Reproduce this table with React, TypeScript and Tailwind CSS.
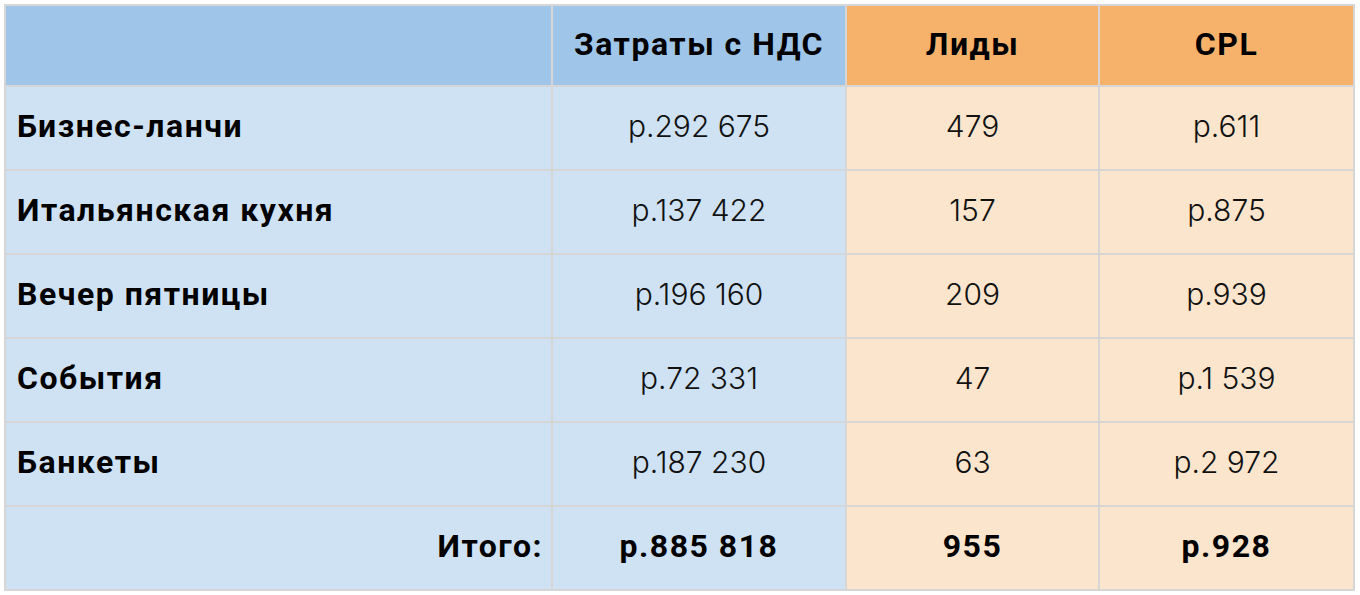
const rows = [
  { name: "Бизнес-ланчи", cost: "р.292 675", leads: "479", cpl: "р.611" },
  { name: "Итальянская кухня", cost: "р.137 422", leads: "157", cpl: "р.875" },
  { name: "Вечер пятницы", cost: "р.196 160", leads: "209", cpl: "р.939" },
  { name: "События", cost: "р.72 331", leads: "47", cpl: "р.1 539" },
  { name: "Банкеты", cost: "р.187 230", leads: "63", cpl: "р.2 972" },
]

const bold = "font-['Roboto',sans-serif] font-bold text-[32px] tracking-[1.5px] text-black pb-[4px]"
const num = "font-['Inter',sans-serif] font-light text-[30px] text-[#111] pb-[4px]"

export default function App() {
  return (
    <div className="w-[1360px] h-[595px] bg-white p-[4px]">
      <table className="border-collapse table-fixed w-[1349px]">
        <colgroup>
          <col className="w-[547px]" />
          <col className="w-[294px]" />
          <col className="w-[253px]" />
          <col className="w-[255px]" />
        </colgroup>
        <thead>
          <tr className="h-[81px]">
            <th className="border-2 border-[#d6d6d6] bg-[#9fc5e8]"></th>
            <th className={`border-2 border-[#d6d6d6] bg-[#9fc5e8] text-center ${bold}`}>Затраты с НДС</th>
            <th className={`border-2 border-[#d6d6d6] bg-[#f6b26b] text-center ${bold}`}>Лиды</th>
            <th className={`border-2 border-[#d6d6d6] bg-[#f6b26b] text-center ${bold}`}>CPL</th>
          </tr>
        </thead>
        <tbody>
          {rows.map((r) => (
            <tr key={r.name} className="h-[84px]">
              <td className={`border-2 border-[#d6d6d6] bg-[#cfe2f3] pl-[11px] text-left ${bold}`}>{r.name}</td>
              <td className={`border-2 border-[#d6d6d6] bg-[#cfe2f3] text-center ${num}`}>{r.cost}</td>
              <td className={`border-2 border-[#d6d6d6] bg-[#fce5cd] text-center ${num}`}>{r.leads}</td>
              <td className={`border-2 border-[#d6d6d6] bg-[#fce5cd] text-center ${num}`}>{r.cpl}</td>
            </tr>
          ))}
          <tr className="h-[84px]">
            <td className={`border-2 border-[#d6d6d6] bg-[#cfe2f3] pr-[8px] text-right ${bold}`}>Итого:</td>
            <td className={`border-2 border-[#d6d6d6] bg-[#cfe2f3] text-center ${bold}`}>р.885 818</td>
            <td className={`border-2 border-[#d6d6d6] bg-[#fce5cd] text-center ${bold}`}>955</td>
            <td className={`border-2 border-[#d6d6d6] bg-[#fce5cd] text-center ${bold}`}>р.928</td>
          </tr>
        </tbody>
      </table>
    </div>
  )
}
